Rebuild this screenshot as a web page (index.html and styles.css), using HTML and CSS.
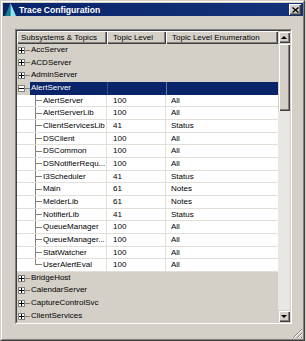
FILE: index.html
```html
<html>
<head>
<meta name="viewport" content="width=device-width, initial-scale=1.0">
<link rel="stylesheet" href="styles.css">
</head>
<body>
<div class="window">
<div class="frame">

<div class="titlebar">
<svg class="icon" viewBox="0 0 11 13" width="11" height="13"><polygon points="5.5,0 0,13 5.5,13" fill="#15808c"/><polygon points="5.5,0 11,13 5.5,13" fill="#8ce6ee"/></svg>
<span class="title">Trace Configuration</span>
<div class="close"><svg viewBox="0 0 7 6" width="7" height="6"><path d="M0.5 0.5L6.5 5.5M6.5 0.5L0.5 5.5" stroke="#000" stroke-width="1.4"/></svg></div>
</div>

<div class="client">
<div class="list">
<div class="inner">

<div class="view">
<div class="header">
<div class="hcell first">Subsystems &amp; Topics</div>
<div class="hcell">Topic Level</div>
<div class="hcell">Topic Level Enumeration</div>
</div>

<div class="rows">
<div class="row"><div class="cell node"><span class="box plus"></span><span class="stub"></span><span class="label">AccServer</span></div><div class="cell"></div><div class="cell"></div></div>
<div class="row"><div class="cell node"><span class="box plus"></span><span class="stub"></span><span class="label">ACDServer</span></div><div class="cell"></div><div class="cell"></div></div>
<div class="row"><div class="cell node"><span class="box plus"></span><span class="stub"></span><span class="label">AdminServer</span></div><div class="cell"></div><div class="cell"></div></div>
<div class="row sel"><div class="cell node"><span class="box minus"></span><span class="stub"></span><span class="label">AlertServer</span></div><div class="cell"></div><div class="cell"></div></div>

<div class="row child"><div class="cell leaf"><span class="branch"></span><span class="label">AlertServer</span></div><div class="cell num">100</div><div class="cell">All</div></div>
<div class="row child"><div class="cell leaf"><span class="branch"></span><span class="label">AlertServerLib</span></div><div class="cell num">100</div><div class="cell">All</div></div>
<div class="row child"><div class="cell leaf"><span class="branch"></span><span class="label">ClientServicesLib</span></div><div class="cell num">41</div><div class="cell">Status</div></div>
<div class="row child"><div class="cell leaf"><span class="branch"></span><span class="label">DSClient</span></div><div class="cell num">100</div><div class="cell">All</div></div>
<div class="row child"><div class="cell leaf"><span class="branch"></span><span class="label">DSCommon</span></div><div class="cell num">100</div><div class="cell">All</div></div>
<div class="row child"><div class="cell leaf"><span class="branch"></span><span class="label">DSNotifierRequ...</span></div><div class="cell num">100</div><div class="cell">All</div></div>
<div class="row child"><div class="cell leaf"><span class="branch"></span><span class="label">I3Scheduler</span></div><div class="cell num">41</div><div class="cell">Status</div></div>
<div class="row child"><div class="cell leaf"><span class="branch"></span><span class="label">Main</span></div><div class="cell num">61</div><div class="cell">Notes</div></div>
<div class="row child"><div class="cell leaf"><span class="branch"></span><span class="label">MelderLib</span></div><div class="cell num">61</div><div class="cell">Notes</div></div>
<div class="row child"><div class="cell leaf"><span class="branch"></span><span class="label">NotifierLib</span></div><div class="cell num">41</div><div class="cell">Status</div></div>
<div class="row child"><div class="cell leaf"><span class="branch"></span><span class="label">QueueManager</span></div><div class="cell num">100</div><div class="cell">All</div></div>
<div class="row child"><div class="cell leaf"><span class="branch"></span><span class="label">QueueManager...</span></div><div class="cell num">100</div><div class="cell">All</div></div>
<div class="row child"><div class="cell leaf"><span class="branch"></span><span class="label">StatWatcher</span></div><div class="cell num">100</div><div class="cell">All</div></div>
<div class="row child"><div class="cell leaf"><span class="branch last"></span><span class="label">UserAlertEval</span></div><div class="cell num">100</div><div class="cell">All</div></div>

<div class="row"><div class="cell node"><span class="box plus"></span><span class="stub"></span><span class="label">BridgeHost</span></div><div class="cell"></div><div class="cell"></div></div>
<div class="row"><div class="cell node"><span class="box plus"></span><span class="stub"></span><span class="label">CalendarServer</span></div><div class="cell"></div><div class="cell"></div></div>
<div class="row"><div class="cell node"><span class="box plus"></span><span class="stub"></span><span class="label">CaptureControlSvc</span></div><div class="cell"></div><div class="cell"></div></div>
<div class="row"><div class="cell node"><span class="box plus"></span><span class="stub"></span><span class="label">ClientServices</span></div><div class="cell"></div><div class="cell"></div></div>
</div>
</div>

<div class="scrollbar">
<div class="sbtn"><span class="arrow up"></span></div>
<div class="thumb"></div>
<div class="track"></div>
<div class="sbtn"><span class="arrow down"></span></div>
</div>

</div>
</div>
</div>

</div>
<svg class="grip" viewBox="0 0 11 11" width="11" height="11">
<path d="M10 1L1 10M10 5L5 10M10 9L9 10" stroke="#808080" stroke-width="1"/>
<path d="M10 2L2 10M10 6L6 10" stroke="#fff" stroke-width="1"/>
</svg>
</div>
</body>
</html>
```

FILE: styles.css
```css
*{
margin:0;
padding:0;
box-sizing:border-box;
}
body{
background:#d4d0c8;
font-family:"Liberation Sans",Arial,sans-serif;
font-size:8px;
color:#000;
}
.window{
position:relative;
width:305px;
height:341px;
border:1px solid;
border-color:#d4d0c8 #404040 #404040 #d4d0c8;
}
.frame{
height:100%;
border:1px solid;
border-color:#fff #808080 #808080 #fff;
padding:1px 0 0 1px;
display:flex;
flex-direction:column;
}
.titlebar{
height:14px;
background:linear-gradient(to right,#0a246a,#14327a);
display:flex;
align-items:center;
color:#fff;
}
.icon{
margin-left:2px;
}
.title{
flex:1;
margin-left:3px;
font-weight:bold;
font-size:8.6px;
}
.close{
width:12px;
height:11px;
margin-right:2px;
background:#d4d0c8;
box-shadow:inset 1px 1px #fff,inset -1px -1px #404040,inset -2px -2px #808080;
display:flex;
align-items:center;
justify-content:center;
}
.close svg{
display:block;
}
.client{
flex:1;
padding:13px 11px 15px 12px;
display:flex;
}
.list{
flex:1;
display:flex;
border:1px solid;
border-color:#808080 #fff #fff #808080;
}
.inner{
flex:1;
display:flex;
border:1px solid;
border-color:#404040 #d4d0c8 #d4d0c8 #404040;
}
.view{
width:261px;
}
.header{
display:grid;
grid-template-columns:90px 59px 112px;
height:13px;
}
.hcell{
background:#d4d0c8;
box-shadow:inset 1px 1px #fff,inset -1px -1px #404040,inset -2px -2px #808080;
line-height:13px;
padding-left:6px;
white-space:nowrap;
overflow:hidden;
}
.hcell.first{
padding-left:4px;
}
.row{
display:grid;
grid-template-columns:90px 59px 112px;
height:12.667px;
line-height:12.667px;
}
.cell{
white-space:nowrap;
overflow:hidden;
padding-left:5px;
}
.num{
padding-left:6px;
}
.node,.leaf{
display:flex;
align-items:center;
padding-left:0;
}
.box{
width:7px;
height:7px;
margin-left:1px;
border:1px solid #808080;
background-color:#fff;
background-repeat:no-repeat;
}
.plus{
background-image:linear-gradient(#000,#000),linear-gradient(#000,#000);
background-size:5px 1px,1px 5px;
background-position:0 2px,2px 0;
}
.minus{
background-image:linear-gradient(#000,#000);
background-size:5px 1px;
background-position:0 2px;
}
.stub{
width:5px;
height:1px;
background:#808080;
}
.label{
flex:1;
align-self:stretch;
padding-left:1px;
}
.sel .label,.sel .cell+.cell{
background:#0a246a;
color:#fff;
}
.sel .cell+.cell{
border-left:1px solid #6a76a0;
}
.sel .cell:nth-child(2){
border-left:1px solid #3a4c84;
}
.child{
background:#fff;
border-bottom:1px solid #e2dfd8;
}
.child .cell{
border-right:1px solid #e2dfd8;
}
.child .cell:last-child{
border-right:none;
}
.branch{
width:7px;
align-self:stretch;
margin-left:18px;
background:linear-gradient(#808080,#808080) left top/1px 100% no-repeat,linear-gradient(#808080,#808080) left center/100% 1px no-repeat;
}
.branch.last{
background:linear-gradient(#808080,#808080) left top/1px 50% no-repeat,linear-gradient(#808080,#808080) left center/100% 1px no-repeat;
}
.scrollbar{
width:12px;
display:flex;
flex-direction:column;
}
.sbtn,.thumb{
background:#d4d0c8;
box-shadow:inset 1px 1px #d4d0c8,inset 2px 2px #fff,inset -1px -1px #404040,inset -2px -2px #808080;
}
.sbtn{
height:12px;
display:flex;
align-items:center;
justify-content:center;
}
.thumb{
height:68px;
}
.track{
flex:1;
background:#e9e7e3;
}
.arrow{
width:0;
height:0;
border-left:3px solid transparent;
border-right:3px solid transparent;
}
.arrow.up{
border-bottom:3px solid #000;
}
.arrow.down{
border-top:3px solid #000;
}
.grip{
position:absolute;
right:1px;
bottom:1px;
}
```
